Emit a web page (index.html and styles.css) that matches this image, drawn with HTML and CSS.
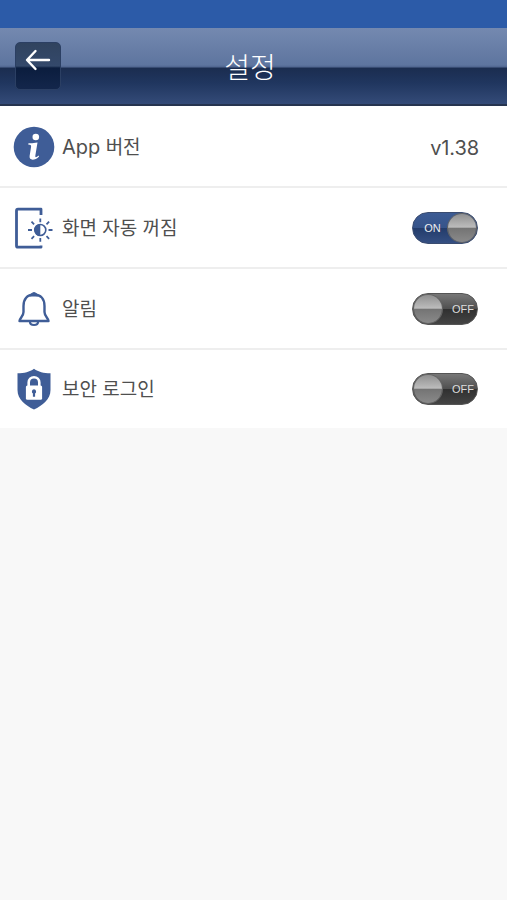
FILE: index.html
```html
<!DOCTYPE html>
<html lang="ko">
<head>
<meta charset="utf-8">
<title>설정</title>
<link rel="stylesheet" href="styles.css">
</head>
<body>
<div class="status-bar"></div>
<header class="header">
  <button class="back" aria-label="뒤로">
    <svg width="26" height="24" viewBox="0 0 26 24" fill="none" stroke="#fff" stroke-width="2.4" stroke-linecap="round" stroke-linejoin="round"><path d="M24 12H2.500M10.500 3L2 12l8.500 9"/></svg>
  </button>
  <h1 class="title">설정</h1>
</header>
<main class="list">
  <div class="row">
    <svg class="icon" viewBox="0 0 42 42"><circle cx="21" cy="21" r="20.300" fill="#3f5d97"/><circle cx="22.800" cy="11" r="3.300" fill="#fff"/><path d="M15.500 17.200c3.200.3 5.500-.2 9-.8l-2.100 12.800c-.4 2.500.6 2.600 3.100.4l.6.8c-4.300 4.500-10.200 4.300-9.500-.3l1.500-9.400c.2-1.700-.6-2.100-2.900-2.200z" fill="#fff"/></svg>
    <span class="label"><span class="latin">App</span> 버전</span>
    <span class="value">v1.38</span>
  </div>
  <div class="row">
    <svg class="icon" viewBox="0 0 42 42" fill="none" stroke="#3f5d97"><path d="M28 8V2.200H5a1.500 1.500 0 0 0-1.500 1.500v35A1.500 1.500 0 0 0 5 40.200h23V38.500" stroke-width="2.800" stroke-linejoin="round"/><circle cx="27.300" cy="23" r="5.500" stroke-width="1.600"/><path d="M27.300 17a6 6 0 0 0 0 12z" fill="#3f5d97" stroke="none"/><path d="M27.300 11.500v3.700M27.300 31v3.700M15 23h4M35.500 23h4M18.500 14.700l2.600 2.600M33.500 29.200l2.600 2.600M18.500 31.800l2.600-2.600M33.500 17.300l2.600-2.600" stroke-width="1.800"/></svg>
    <span class="label">화면 자동 꺼짐</span>
    <span class="toggle on"><span class="state">ON</span><span class="knob"></span></span>
  </div>
  <div class="row">
    <svg class="icon" viewBox="0 0 42 42" fill="none" stroke="#3f5d97"><path d="M16.500 8q4.500-7 9 0z" fill="#3f5d97"/><path d="M21 6.500C14 6.500 10.500 11.500 10.500 18v6c0 4.500-4 6.500-4 9h29c0-2.500-4-4.500-4-9v-6C31.500 11.500 28 6.500 21 6.500z" stroke-width="2.400" stroke-linejoin="round"/><path d="M17 34q0 3 4 3t4-3" stroke-width="2.200"/></svg>
    <span class="label">알림</span>
    <span class="toggle"><span class="knob"></span><span class="state">OFF</span></span>
  </div>
  <div class="row">
    <svg class="icon" viewBox="0 0 42 42"><path d="M21 .8c4.500 3.300 9.500 4.500 16.500 4.500V22c0 9.500-8 15.500-16.500 19.500C12.500 37.500 4.500 31.500 4.500 22V5.300C11.500 5.300 16.500 4.100 21 .8z" fill="#3f5d97"/><path d="M15.700 19v-4.500a5.300 5.300 0 0 1 10.600 0V19" fill="none" stroke="#fff" stroke-width="2.600"/><rect x="12.900" y="17.500" width="16.200" height="14.200" rx="1.500" fill="#fff"/><path d="M21 21.300a2.300 2.300 0 0 1 1.100 4.200v3.200h-2.200v-3.200a2.300 2.300 0 0 1 1.100-4.200z" fill="#3f5d97"/></svg>
    <span class="label">보안 로그인</span>
    <span class="toggle"><span class="knob"></span><span class="state">OFF</span></span>
  </div>
</main>
</body>
</html>
```
FILE: styles.css
```css
* { box-sizing: border-box; }
body {
  margin: 0;
  min-height: 900px;
  background: #f8f8f8;
  color: #4f4f4f;
  font-family: Inter, "Noto Sans CJK KR", sans-serif;
}
.status-bar { height: 28px; background: #2c5ba8; }
.header {
  display: grid;
  grid-template-columns: 46px 1fr 46px;
  align-items: center;
  height: 78px;
  padding: 0 22px 0 15px;
  background: linear-gradient(#7489b0 0, #5e759f 37px, #536993 38.500px, #1b2d50 40.500px, #20365f 55px, #344b78 76px);
  border-bottom: 2px solid #26344f;
}
.back {
  display: flex;
  justify-content: center;
  width: 46px;
  height: 48px;
  padding: 5px 0 0;
  border: 1px solid #2b3f63;
  border-radius: 5px;
  background: linear-gradient(#30435f, #34496b 23px, #0b1d3e 25px, #13264b);
}
.title {
  margin: 0;
  padding-top: 3px;
  color: #fff;
  font-size: 28px;
  font-weight: 300;
  line-height: 40px;
  text-align: center;
}
.list { padding-top: 1px; background: #fff; }
.row {
  display: flex;
  align-items: center;
  height: 81px;
  padding: 0 29px 0 13px;
  border-bottom: 2px solid #eee;
}
.row:last-child { height: 78px; border-bottom: 0; }
.icon { width: 42px; height: 42px; flex: none; }
.label { flex: 1; margin-left: 7px; padding-top: 2px; font-size: 19px; line-height: 30px; }
.latin { font-size: 20px; }
.value { margin-right: -1px; padding-top: 2px; font-size: 20px; letter-spacing: -.1px; }
.toggle {
  display: flex;
  align-items: center;
  width: 66px;
  height: 32px;
  padding: 1px;
  border: 1px solid #555;
  border-radius: 16px;
  background: linear-gradient(#777, #505050 49%, #303030 51%, #444);
}
.toggle.on { border-color: #3a4c70; background: linear-gradient(#3c5b94, #36548a 49%, #233c6b 51%, #354f82); }
.knob {
  width: 28px;
  height: 28px;
  flex: none;
  border-radius: 50%;
  background: linear-gradient(#909090, #bcbcbc 47%, #747474 51%, #8a8a8a);
  box-shadow: 0 0 0 1px #646464;
}
.state { flex: 1; color: #ddd; font: 11px/14px "Liberation Sans", sans-serif; text-align: center; }
.toggle:not(.on) .state { margin-left: 8px; }
.on .state { color: #eee; padding-left: 3px; }
```
